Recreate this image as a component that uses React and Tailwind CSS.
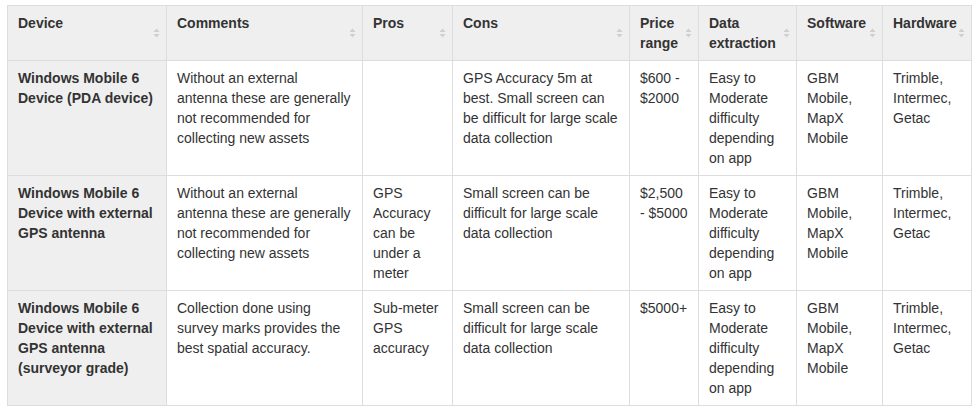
import React from "react"

const columns = [
  { label: "Device", width: 159 },
  { label: "Comments", width: 196 },
  { label: "Pros", width: 90 },
  { label: "Cons", width: 177 },
  { label: "Price range", width: 69 },
  { label: "Data extraction", width: 98 },
  { label: "Software", width: 86 },
  { label: "Hardware", width: 89 },
]

const rows = [
  [
    "Windows Mobile 6 Device (PDA device)",
    "Without an external antenna these are generally not recommended for collecting new assets",
    "",
    "GPS Accuracy 5m at best. Small screen can be difficult for large scale data collection",
    "$600 - $2000",
    "Easy to Moderate difficulty depending on app",
    "GBM Mobile, MapX Mobile",
    "Trimble, Intermec, Getac",
  ],
  [
    "Windows Mobile 6 Device with external GPS antenna",
    "Without an external antenna these are generally not recommended for collecting new assets",
    "GPS Accuracy can be under a meter",
    "Small screen can be difficult for large scale data collection",
    "$2,500 - $5000",
    "Easy to Moderate difficulty depending on app",
    "GBM Mobile, MapX Mobile",
    "Trimble, Intermec, Getac",
  ],
  [
    "Windows Mobile 6 Device with external GPS antenna (surveyor grade)",
    "Collection done using survey marks provides the best spatial accuracy.",
    "Sub-meter GPS accuracy",
    "Small screen can be difficult for large scale data collection",
    "$5000+",
    "Easy to Moderate difficulty depending on app",
    "GBM Mobile, MapX Mobile",
    "Trimble, Intermec, Getac",
  ],
]

function SortIcon() {
  return (
    <svg
      className="absolute right-[6px] top-1/2 -translate-y-1/2"
      width="7"
      height="10"
      viewBox="0 0 7 10"
    >
      <path d="M3.5 0.5 L6.5 4 L0.5 4 Z" fill="#cfcfcf" />
      <path d="M0.5 6 L6.5 6 L3.5 9.5 Z" fill="#cfcfcf" />
    </svg>
  )
}

export default function App() {
  return (
    <div className="min-h-[411px] bg-white pl-[7px] pt-[5px] font-['Liberation_Sans',Arial,sans-serif] text-[14px] leading-5 text-[#333]">
      <table className="w-[965px] table-fixed border-collapse border border-[#ddd]">
        <colgroup>
          {columns.map((col) => (
            <col key={col.label} style={{ width: col.width }} />
          ))}
        </colgroup>
        <thead>
          <tr className="bg-[#efefef]">
            {columns.map((col) => (
              <th
                key={col.label}
                className="relative border border-[#ddd] py-[7px] pl-[10px] pr-[22px] text-left align-top font-bold"
              >
                {col.label}
                <SortIcon />
              </th>
            ))}
          </tr>
        </thead>
        <tbody>
          {rows.map((row, i) => (
            <tr key={i}>
              {row.map((cell, j) => (
                <td
                  key={j}
                  className={`border border-[#ddd] py-[7px] pl-[10px] pr-[10px] align-top ${
                    j === 0 ? "bg-[#efefef] font-bold" : "bg-white"
                  }`}
                >
                  {cell}
                </td>
              ))}
            </tr>
          ))}
        </tbody>
      </table>
    </div>
  )
}
